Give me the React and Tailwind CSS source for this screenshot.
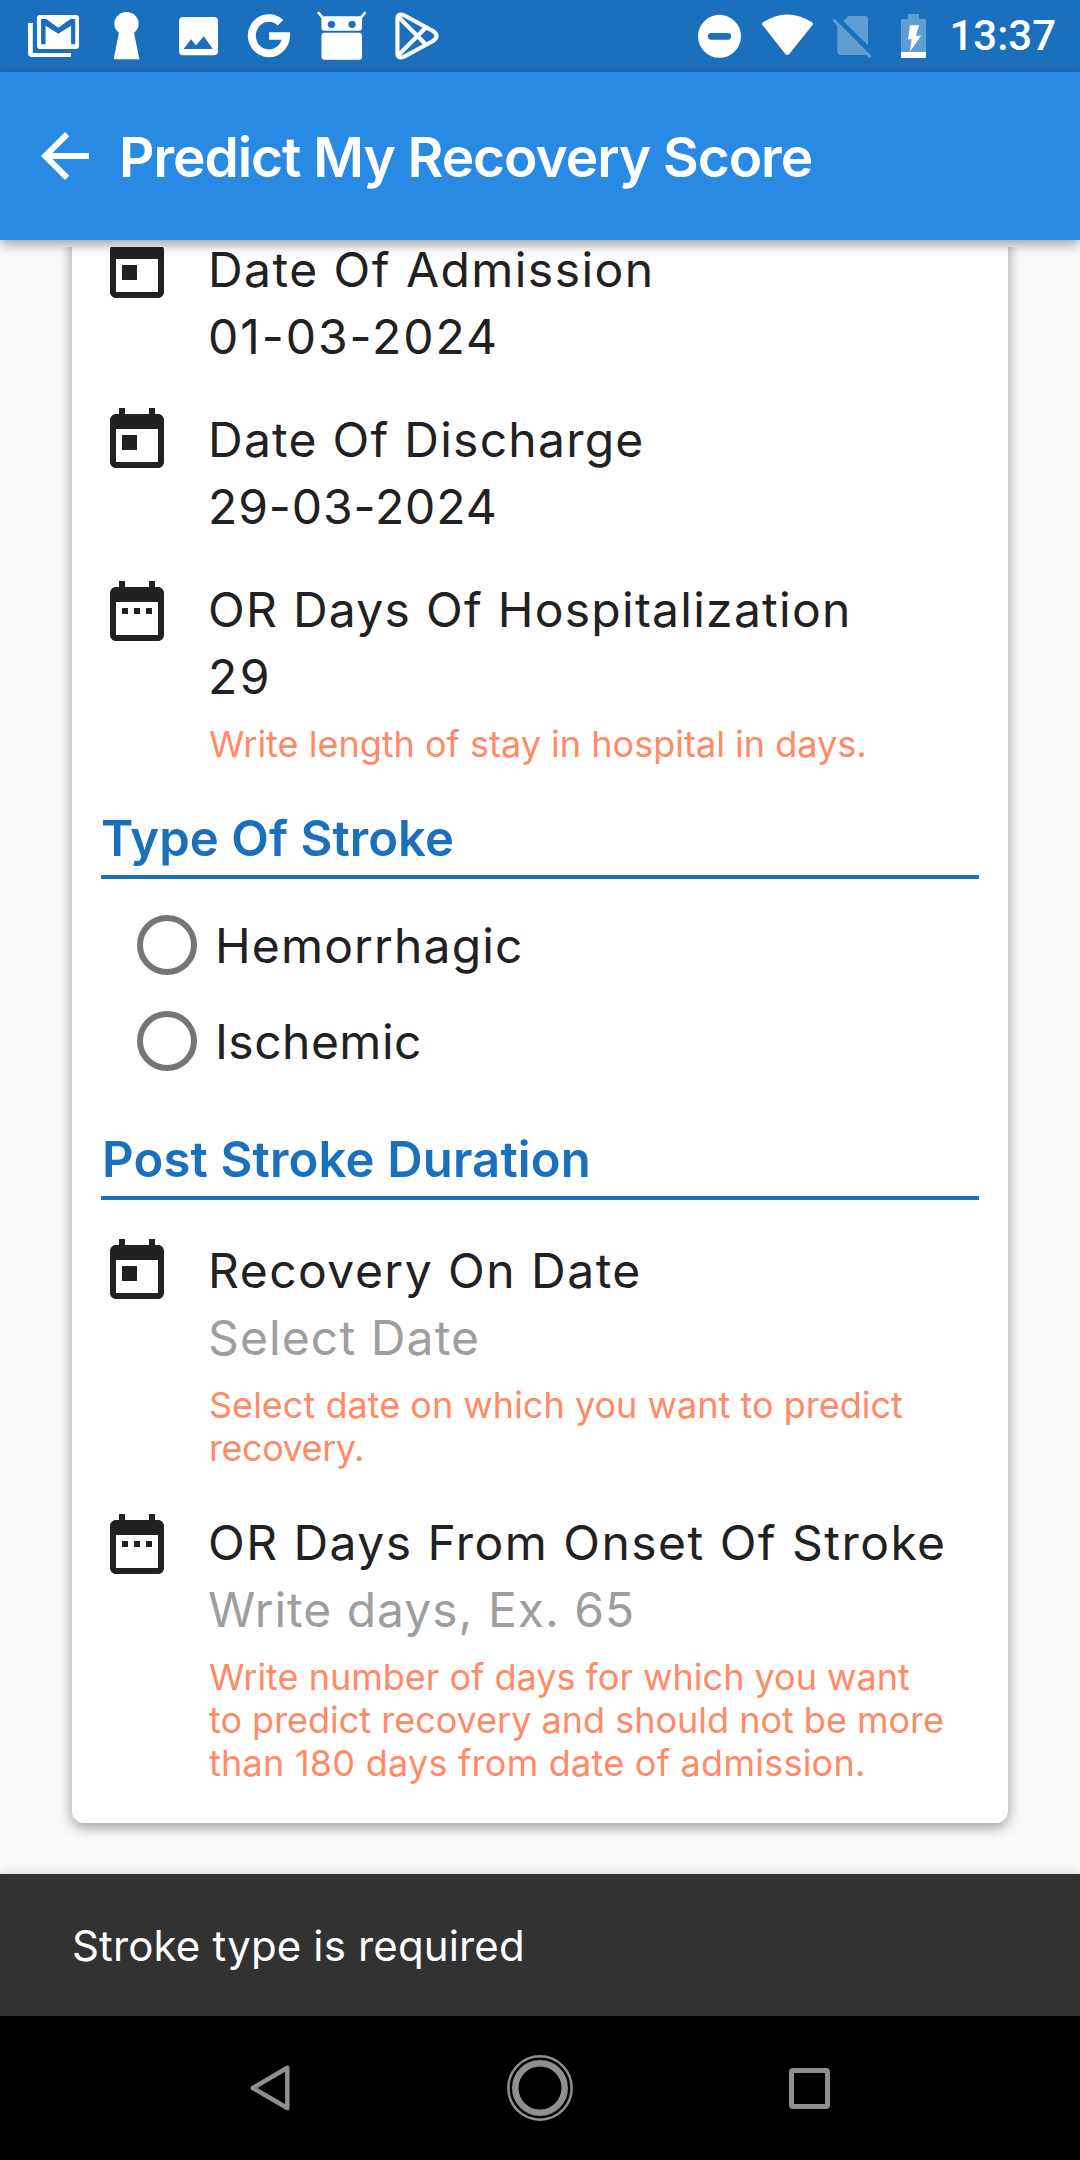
function StatusIcon({ x, w, width, className, children }) {
  return (
    <svg viewBox={`${x} 0 ${w} 216`} width={width} height="72" preserveAspectRatio="none" className={`block shrink-0 ${className || ''}`} fill="#fff">
      {children}
    </svg>
  );
}

function StatusBar() {
  return (
    <div className="flex h-[72px] shrink-0 items-center justify-between bg-[#1b70bd] pr-[24px] pl-[28px]">
      <div className="flex items-center">
        <StatusIcon x={81} w={148} width={51}>
          <path d="M81 69h14v90h111v12H93a12 12 0 0 1-12-12z" />
          <rect x="107" y="45" width="122" height="102" rx="9" />
          <path fill="#1b70bd" d="M119 57h15l35 26 35-26h14v76h-12V77l-37 24-37-24v56h-13z" />
        </StatusIcon>
        <StatusIcon x={327} w={78} width={27} className="ml-[34px]">
          <path d="M344 98a35 35 0 1 1 44 0l15 80h-74z" />
        </StatusIcon>
        <StatusIcon x={519} w={113} width={39} className="ml-[39px]">
          <rect x="519" y="51" width="113" height="115" rx="12" />
          <path fill="#1b70bd" d="M532 147l22-29 14 18 23-27 26 38z" />
        </StatusIcon>
        <StatusIcon x={720} w={126} width={43.5} className="ml-[29px]">
          <path fill="none" stroke="#fff" strokeWidth="23" d="M817 68A49.500 53 0 1 0 833 108H784" />
        </StatusIcon>
        <StatusIcon x={921} w={144} width={49.5} className="ml-[26px]">
          <path fill="none" stroke="#fff" strokeWidth="8" strokeLinecap="round" d="M926 39l12 15M1060 39l-12 15" />
          <path fillRule="evenodd" d="M942 49h102q8 0 8 8v28q0 7-8 7H942q-8 0-8-7V57q0-8 8-8zM963 62a11 11 0 1 0 .01 0zM1023 62a11 11 0 1 0 .01 0z" />
          <rect x="934" y="98" width="118" height="81" rx="9" />
        </StatusIcon>
        <StatusIcon x={1149} w={126} width={43.5} className="ml-[29px]">
          <g fill="none" stroke="#fff" strokeWidth="12" strokeLinejoin="round">
            <path d="M1156 58Q1156 38 1175 46L1259 93Q1280 108 1259 123L1175 170Q1156 178 1156 158z" />
            <path d="M1158 50l79 82M1158 166l79-82" />
          </g>
        </StatusIcon>
      </div>
      <div className="flex items-center">
        <StatusIcon x={174} w={129} width={43}>
          <circle cx="238.500" cy="109" r="64.500" />
          <rect x="204" y="99" width="69" height="20" rx="9" fill="#1b70bd" />
        </StatusIcon>
        <StatusIcon x={366} w={153} width={51} className="ml-[21px]">
          <path d="M367 74q-2-4 2-7Q442 20 516 67q4 3 2 7L448 162q-6 6-12 0z" />
        </StatusIcon>
        <StatusIcon x={576} w={120} width={40} className="ml-[19px]">
          <g fill="#609dd3">
            <path d="M625 48h50q9 0 9 9v79L610 63z" />
            <path d="M592 73l90 90q-2 2-7 2h-72q-11 0-11-11z" />
            <path fill="none" stroke="#609dd3" strokeWidth="9" strokeLinecap="round" d="M583 62l106 107" />
          </g>
        </StatusIcon>
        <StatusIcon x={783} w={75} width={25} className="ml-[29px]">
          <path fill="#609dd3" d="M804 42h33v15h17q4 0 4 4v95h-75V61q0-4 4-4h17z" />
          <path d="M783 156h75v14q0 4-4 4h-67q-4 0-4-4z" />
          <path d="M810 76h27l-9 31h15l-34 49 6-38h-11z" />
        </StatusIcon>
        <span className="ml-[23px] font-['Roboto',sans-serif] text-[42px] leading-[74px] font-medium text-white">13:37</span>
      </div>
    </div>
  );
}

function AppBar() {
  return (
    <header className="relative z-10 flex h-[168px] shrink-0 items-center bg-[#288ae2] pl-[29px] shadow-[0_4px_12px_rgba(0,0,0,0.38)]">
      <svg viewBox="0 0 24 24" width="72" height="72" className="block shrink-0" fill="#fff">
        <path d="M20 11H7.830l5.590-5.590L12 4l-8 8 8 8 1.410-1.410L7.830 13H20v-2z" />
      </svg>
      <h1 className="ml-[18px] pt-px text-[55px] leading-[72px] font-semibold tracking-[-1.050px] whitespace-nowrap text-white">
        Predict My Recovery Score
      </h1>
    </header>
  );
}

function CalendarIcon({ range }) {
  return (
    <svg viewBox="0 0 24 24" width="72" height="72" className={`block shrink-0 ${range ? 'mt-[3px]' : ''}`} fill="#212121">
      {range ? (
        <path d="M9 10H7v2h2v-2zm4 0h-2v2h2v-2zm4 0h-2v2h2v-2zm2-7h-1V1h-2v2H8V1H6v2H5c-1.110 0-1.990.9-1.990 2L3 19c0 1.100.890 2 2 2h14c1.100 0 2-.9 2-2V5c0-1.100-.9-2-2-2zm0 16H5V8h14v11z" />
      ) : (
        <path d="M19 3h-1V1h-2v2H8V1H6v2H5c-1.110 0-1.990.9-1.990 2L3 19c0 1.100.890 2 2 2h14c1.100 0 2-.9 2-2V5c0-1.100-.9-2-2-2zm0 16H5V8h14v11zM7 10h5v5H7z" />
      )}
    </svg>
  );
}

function Field({ range, label, labelClass, value, valueClass, hints }) {
  return (
    <div className="flex">
      <CalendarIcon range={range} />
      <div className="ml-[35px] pt-px text-[48px] leading-[67px] whitespace-nowrap text-[#212121]">
        <div className={labelClass}>{label}</div>
        <div className={valueClass}>{value}</div>
        {hints && (
          <div className="mt-[13px] ml-px text-[36px] leading-[43px] text-[#ff8a65]">
            {hints.map(([text, tracking]) => (
              <div key={text} className={tracking}>{text}</div>
            ))}
          </div>
        )}
      </div>
    </div>
  );
}

function SectionTitle({ children, className }) {
  return (
    <h2 className={`h-[76px] w-[878px] border-b-4 border-[#1b70bd] text-[49px] leading-[72px] font-semibold whitespace-nowrap text-[#1b70bd] ${className}`}>
      {children}
    </h2>
  );
}

function RadioOption({ label, className }) {
  return (
    <div className="flex h-[96px] items-center pl-[36px]">
      <span className="block size-[60px] shrink-0 rounded-full border-6 border-[#757575]" />
      <span className={`ml-[18px] pt-[2px] text-[48px] leading-[60px] text-[#212121] ${className}`}>{label}</span>
    </div>
  );
}

function RecoveryForm() {
  return (
    <main className="mt-[7px] h-[1627px] shrink-0 overflow-hidden">
      <div className="-mt-[32px] ml-[72px] h-[1608px] w-[936px] rounded-[12px] bg-white pt-[20px] pl-[29px] shadow-[0_4px_14px_rgba(0,0,0,0.4)]">
        <div className="h-[170px]">
          <Field label="Date Of Admission" labelClass="tracking-[1.450px]" value="01-03-2024" valueClass="tracking-[1.960px]" />
        </div>
        <div className="h-[170px]">
          <Field label="Date Of Discharge" labelClass="tracking-[1.250px]" value="29-03-2024" valueClass="tracking-[0.900px]" />
        </div>
        <div className="h-[228px]">
          <Field
            range
            label="OR Days Of Hospitalization"
            labelClass="tracking-[1.270px]"
            value="29"
            valueClass="tracking-[2.500px]"
            hints={[['Write length of stay in hospital in days.', 'tracking-[0.010px]']]}
          />
        </div>
        <SectionTitle className="tracking-[0.050px]">Type Of Stroke</SectionTitle>
        <div className="pt-[18px]">
          <RadioOption label="Hemorrhagic" className="tracking-[1.150px]" />
          <RadioOption label="Ischemic" className="tracking-[0.470px]" />
        </div>
        <SectionTitle className="mt-[35px] pl-px tracking-[0.170px]">Post Stroke Duration</SectionTitle>
        <div className="h-[308px] pt-[36px]">
          <Field
            label="Recovery On Date"
            labelClass="tracking-[1.480px]"
            value="Select Date"
            valueClass="tracking-[1.120px] text-[#9e9e9e]"
            hints={[
              ['Select date on which you want to predict', 'tracking-[0.020px]'],
              ['recovery.', 'tracking-[-0.460px]'],
            ]}
          />
        </div>
        <Field
          range
          label="OR Days From Onset Of Stroke"
          labelClass="tracking-[1.460px]"
          value="Write days, Ex. 65"
          valueClass="tracking-[0.980px] text-[#9e9e9e]"
          hints={[
            ['Write number of days for which you want', 'tracking-normal'],
            ['to predict recovery and should not be more', 'tracking-[-0.010px]'],
            ['than 180 days from date of admission.', 'tracking-[0.250px]'],
          ]}
        />
      </div>
    </main>
  );
}

function Snackbar() {
  return (
    <div className="relative flex h-[142px] shrink-0 items-center bg-[#323232] pt-[2px] pl-[72px] text-[42px] leading-[60px] tracking-[0.150px] text-white shadow-[0_0_12px_rgba(0,0,0,0.16)]">
      Stroke type is required
    </div>
  );
}

function NavigationBar() {
  return (
    <nav className="flex h-[144px] shrink-0 items-center justify-between bg-black px-[250px]">
      <svg viewBox="0 0 40 46" width="40" height="46" fill="none" stroke="#8f8f8f" strokeWidth="4.500" strokeLinejoin="round">
        <path d="M37.300 2.800V43L2.800 23z" />
      </svg>
      <svg viewBox="0 0 66 66" width="66" height="66" fill="none" stroke="#8f8f8f">
        <circle cx="33" cy="33" r="31.700" strokeWidth="2.500" />
        <circle cx="33" cy="33" r="24.700" strokeWidth="6.500" />
      </svg>
      <span className="block size-[41px] rounded-[4px] border-5 border-[#8f8f8f]" />
    </nav>
  );
}

export default function App() {
  return (
    <div className="flex h-[2160px] w-[1080px] flex-col overflow-hidden bg-[#fafafa] font-['Inter',sans-serif]">
      <StatusBar />
      <AppBar />
      <RecoveryForm />
      <Snackbar />
      <NavigationBar />
    </div>
  );
}
